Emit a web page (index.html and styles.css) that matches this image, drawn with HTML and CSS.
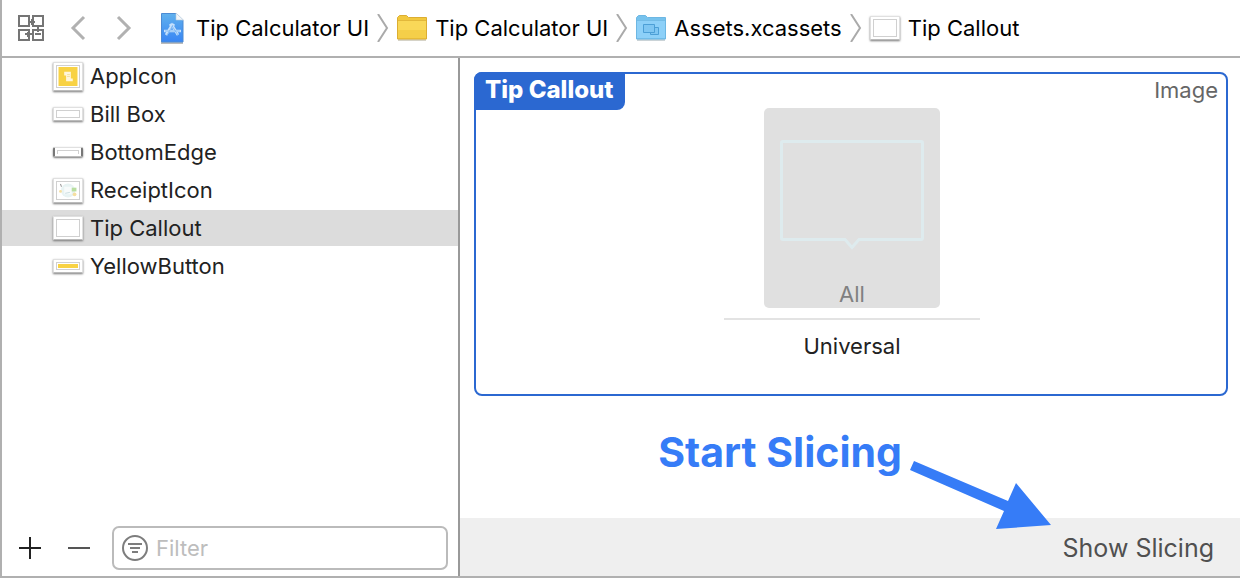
FILE: index.html
```html
<!DOCTYPE html>
<html lang="en">
<head>
<meta charset="utf-8">
<title>Assets.xcassets</title>
<link rel="stylesheet" href="styles.css">
</head>
<body>
<div class="window">
  <header class="jump-bar">
    <button class="icon-button related" aria-label="Related items">
      <svg width="28" height="28" fill="none" stroke="#757575" stroke-width="2"><path d="M2 2h10v10H2zM16 2h10v10H16zM2 16h10v10H2zM16 16h10v10H16zM12 8h6M15 5v6M8 20h8M11 18v5M21 12v6M18 20h6"/></svg>
    </button>
    <button class="icon-button back" aria-label="Back">
      <svg width="16" height="26" fill="none" stroke="#b1b1b1" stroke-width="3"><path d="M14 2 3 13l11 11"/></svg>
    </button>
    <button class="icon-button forward" aria-label="Forward">
      <svg width="16" height="26" fill="none" stroke="#b1b1b1" stroke-width="3"><path d="M2 2l11 11L2 24"/></svg>
    </button>
    <nav class="path" aria-label="Path">
      <a class="crumb project" href="#">
        <svg width="26" height="32"><defs><linearGradient id="doc" x2="0" y2="1"><stop stop-color="#61b1ed"/><stop offset="1" stop-color="#3885f4"/></linearGradient></defs><path d="M2 31h22" stroke="#bbb" stroke-width="2"/><path d="M2.500 1.500H17l7 7v21.500H2.500z" fill="url(#doc)" stroke="#4c8bd4"/><path d="M17 1v7h7.500z" fill="#f2f5f8" stroke="#b6c9dc" stroke-width=".6"/><path d="M7 23l6-10 6 10M15 12l-2 3M5 19h17M11 12l2 3" fill="none" stroke="#c5e0fc" stroke-width="2.600"/><path d="M8 23l6-10M13 14l6 9M6 19h15" stroke="#5aa4ee" stroke-width=".6"/></svg>
        <span>Tip Calculator UI</span>
      </a>
      <svg class="separator" width="12" height="28" fill="none" stroke="#aaa" stroke-width="2"><path d="M1 0l9 14-9 14"/></svg>
      <a class="crumb" href="#">
        <svg width="30" height="26"><path d="M1 25h28" stroke="#c9c4b5" stroke-width="1.500"/><path d="M.5 24V2.500l2-2h7l2 2h18V24z" fill="#f2c83d" stroke="#dcae32"/><path d="M1 6h28v17H1z" fill="#f9d858"/><path d="M1 5.500h28" stroke="#e2b83b"/><path d="M1 15h28v8H1z" fill="#f5cf49"/></svg>
        <span>Tip Calculator UI</span>
      </a>
      <svg class="separator" width="12" height="28" fill="none" stroke="#aaa" stroke-width="2"><path d="M1 0l9 14-9 14"/></svg>
      <a class="crumb" href="#">
        <svg width="30" height="26"><path d="M1 25h28" stroke="#b9c4ca" stroke-width="1.500"/><path d="M.5 24V2.500l2-2h7l2 2h18V24z" fill="#76c2ed" stroke="#6db7e3"/><path d="M1 6h28v17H1z" fill="#8dd0f8"/><path d="M1 5.500h28" stroke="#74bce6"/><g fill="#7fc6f2" stroke="#4c9fd6"><path d="M14.500 12.500h8v7h-8z"/><path d="M7.500 9.500h11v8h-11z"/></g></svg>
        <span>Assets.xcassets</span>
      </a>
      <svg class="separator" width="12" height="28" fill="none" stroke="#aaa" stroke-width="2"><path d="M1 0l9 14-9 14"/></svg>
      <a class="crumb" href="#" aria-current="page">
        <span class="thumb wide"><i class="art"></i></span>
        <span>Tip Callout</span>
      </a>
    </nav>
  </header>
  <div class="columns">
    <aside class="sidebar">
      <ul class="assets">
        <li><button class="asset"><span class="thumb square"><i class="art"><svg class="fill-art" viewBox="0 0 20 20"><path fill="#f8d244" d="M0 0h20v20H0z"/><path fill="#fff6dc" d="M6 5h7v7h2v3H8V9H6z"/><path d="M9 8h3M9 10h3" stroke="#f1dfa0"/></svg></i></span>AppIcon</button></li>
        <li><button class="asset"><span class="thumb slim"><i class="art"></i></span>Bill Box</button></li>
        <li><button class="asset"><span class="thumb edge"><i class="art"></i></span>BottomEdge</button></li>
        <li><button class="asset"><span class="thumb tall"><i class="art"><svg class="fill-art" viewBox="0 0 20 16"><circle cx="10" cy="8" r="7.500" fill="#e8f3f3"/><path fill="#f8fbfb" d="M6 4h8v8H6z"/><path fill="#b9dea0" d="M14 5h5v4h-5z"/><path d="M2 1l1 3" stroke="#888"/><circle cx="2" cy="9" r="1.500" fill="#f6dfa0"/><circle cx="17" cy="12" r="2" fill="#f6dfa0"/><path d="M7 11l5-1" stroke="#c9dde0"/></svg></i></span>ReceiptIcon</button></li>
        <li><button class="asset selected" aria-current="true"><span class="thumb wide"><i class="art"></i></span>Tip Callout</button></li>
        <li><button class="asset"><span class="thumb slim yellow"><i class="art"></i></span>YellowButton</button></li>
      </ul>
      <div class="list-tools">
        <button class="icon-button" aria-label="Add"><svg width="22" height="22" stroke="#222" stroke-width="2"><path d="M11 0v22M0 11h22"/></svg></button>
        <button class="icon-button" aria-label="Remove"><svg width="22" height="22" stroke="#555" stroke-width="2"><path d="M0 11h22"/></svg></button>
        <label class="filter">
          <svg width="26" height="26" fill="none" stroke="#7d7d7d" stroke-width="2"><circle cx="13" cy="13" r="12"/><path d="M6 9h14M8 13h10M10 17h6"/></svg>
          <input type="text" placeholder="Filter" aria-label="Filter">
        </label>
      </div>
    </aside>
    <main class="editor">
      <section class="image-set">
        <div class="set-head"><h1 class="set-name">Tip Callout</h1><span class="set-kind">Image</span></div>
        <div class="slots">
          <button class="slot">
            <svg width="144" height="110" fill="none" stroke="#deebee" stroke-width="3"><path d="M3 1.500h138q1.500 0 1.500 1.500v95q0 1.500-1.500 1.500H79l-7 8-7-8H3q-1.500 0-1.500-1.500V3q0-1.500 1.500-1.500z"/></svg>
            <span>All</span>
          </button>
          <p class="idiom">Universal</p>
        </div>
      </section>
      <footer class="editor-bar"><button class="slicing">Show Slicing</button></footer>
      <div class="callout">
        <strong>Start Slicing</strong>
        <svg width="143" height="70" fill="#367cf7"><path d="M5 1l94 40 8-18 35 42-55 4 8-18L1 10z"/></svg>
      </div>
    </main>
  </div>
</div>
</body>
</html>
```
FILE: styles.css
```css
* { box-sizing: border-box; }
body {
  margin: 0;
  font: 22px/28px Inter, "Liberation Sans", sans-serif;
  color: #222;
  background: #fff;
}
svg { display: block; flex: none; }
button {
  margin: 0;
  padding: 0;
  border: 0;
  background: none;
  color: inherit;
  font: inherit;
}
.window {
  display: flex;
  flex-direction: column;
  min-height: 100vh;
  border: solid #b0b0b0;
  border-width: 0 0 2px 2px;
}
.jump-bar {
  display: flex;
  align-items: center;
  height: 58px;
  padding: 0 15px;
  border-bottom: 2px solid #b0b0b0;
}
.back { margin-left: 25px; }
.forward { margin-left: 30px; }
.path {
  display: flex;
  align-items: center;
  gap: 8px;
  margin-left: 27px;
  white-space: nowrap;
}
.crumb {
  display: flex;
  align-items: center;
  gap: 8px;
  color: #000;
  text-decoration: none;
}
.project { gap: 11px; }

.thumb {
  display: flex;
  flex: none;
  width: 30px;
  padding: 2px;
  background: #fff;
  border: 1px solid #e0e0e0;
  border-bottom-color: #bbb;
  box-shadow: 0 1px 2px #777;
}
.art { flex: 1; border: 1px solid #d0d0d0; padding: 1px; }
.square { height: 29px; }
.wide { height: 24px; }
.tall { height: 25px; }
.slim { height: 14px; }
.edge { height: 10px; border-left: 2px solid #777; border-right: 2px solid #777; border-radius: 2px; }
.edge .art { border-bottom: 0; }
.fill-art { width: 100%; height: 100%; }
.yellow .art { background: #f8d244 content-box; }

.columns { display: flex; flex: 1; }
.sidebar {
  display: flex;
  flex-direction: column;
  flex: 0 0 37%;
  border-right: 2px solid #999;
}
.assets {
  display: flex;
  flex-direction: column;
  gap: 2px;
  margin: 0;
  padding: 0;
  list-style: none;
}
.asset {
  display: flex;
  align-items: center;
  gap: 7px;
  width: 100%;
  height: 36px;
  padding-left: 51px;
  text-align: left;
}
.selected { background: #dcdcdc; }
.list-tools {
  display: flex;
  align-items: center;
  gap: 27px;
  margin-top: auto;
  padding: 6px 10px 6px 17px;
}
.filter {
  display: flex;
  align-items: center;
  flex: 1;
  gap: 8px;
  height: 44px;
  margin-left: -5px;
  padding: 0 8px;
  border: 2px solid #bbb;
  border-radius: 7px;
}
.filter input {
  flex: 1;
  width: 0;
  padding: 0;
  border: 0;
  outline: 0;
  background: none;
  font: inherit;
}
.filter input::placeholder { color: #bdbdbd; opacity: 1; }

.editor {
  position: relative;
  display: flex;
  flex-direction: column;
  flex: 1;
}
.image-set {
  margin: 14px 12px 0 14px;
  padding-bottom: 34px;
  border: 2px solid #2b68d1;
  border-radius: 8px;
}
.set-head {
  display: flex;
  align-items: flex-start;
  justify-content: space-between;
}
.set-name {
  margin: -2px 0 0 -2px;
  padding: 4px 12px 6px 11px;
  border-radius: 8px 0 8px 0;
  background: #2b68d1;
  color: #fff;
  font-size: 24px;
  font-weight: 800;
  line-height: 28px;
}
.set-kind { padding: 2px 8px 0 0; color: #666; }
.slots {
  display: flex;
  flex-direction: column;
  align-items: center;
  margin-top: -2px;
  padding-left: 2px;
}
.slot {
  display: flex;
  flex-direction: column;
  align-items: center;
  gap: 30px;
  width: 176px;
  padding: 32px 0 0;
  border-radius: 5px;
  background: #e0e0e0;
  color: #808080;
}
.idiom {
  width: 256px;
  margin: 10px 0 0;
  padding-top: 12px;
  border-top: 2px solid #e3e3e3;
  text-align: center;
}
.editor-bar {
  display: flex;
  align-items: center;
  justify-content: flex-end;
  height: 58px;
  margin-top: auto;
  padding: 2px 26px 0;
  background: #efefef;
  color: #505050;
  font-size: 25px;
}
.callout {
  position: absolute;
  right: 188px;
  bottom: 46px;
  display: flex;
  align-items: flex-start;
  gap: 7px;
  color: #367cf7;
}
.callout strong { font-size: 41px; line-height: 40px; }
.callout svg { margin-top: 28px; }
```
